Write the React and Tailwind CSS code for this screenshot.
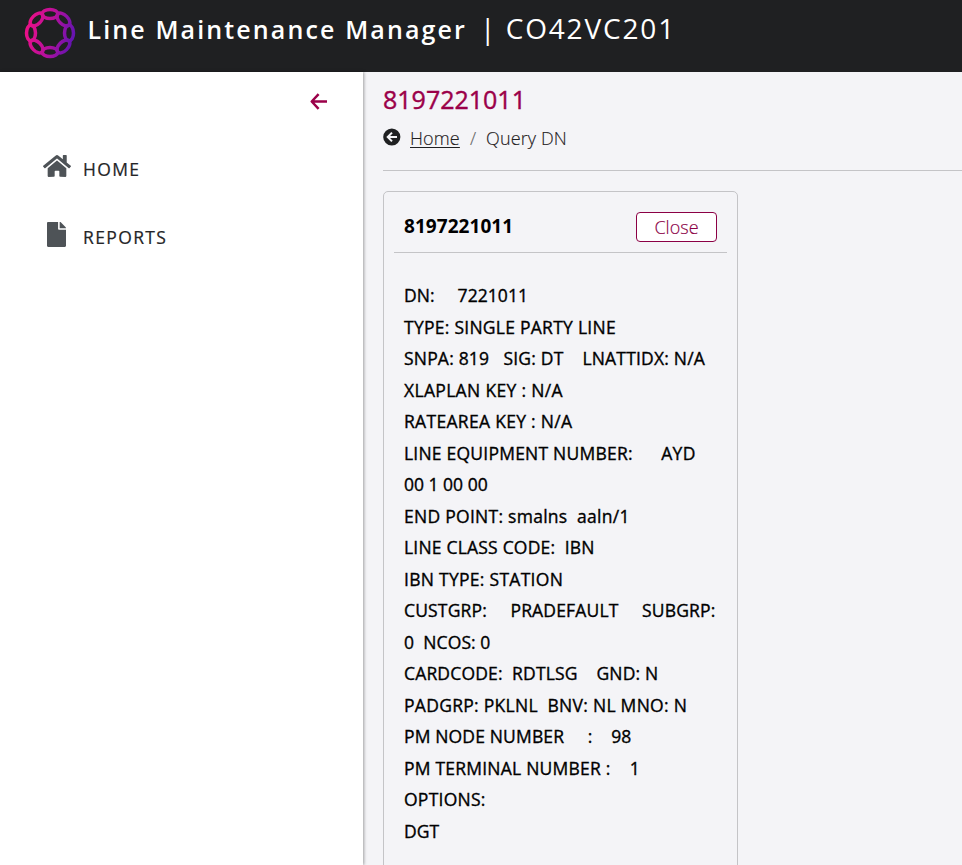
import { FaFile, FaHome } from "react-icons/fa";

const reportLines = [
  ["DN:     7221011", "tracking-[0.05px]"],
  ["TYPE: SINGLE PARTY LINE", "tracking-[0.26px]"],
  ["SNPA: 819   SIG: DT    LNATTIDX: N/A", "tracking-[0.19px]"],
  ["XLAPLAN KEY : N/A", "tracking-[0.33px]"],
  ["RATEAREA KEY : N/A", "tracking-[0.3px]"],
  ["LINE EQUIPMENT NUMBER:      AYD", "tracking-[0.22px]"],
  ["00 1 00 00", "tracking-[0px]"],
  ["END POINT: smalns  aaln/1", "tracking-[0.27px]"],
  ["LINE CLASS CODE:  IBN", "tracking-[0.2px]"],
  ["IBN TYPE: STATION", "tracking-[0.28px]"],
  ["CUSTGRP:     PRADEFAULT     SUBGRP:", "tracking-[0.16px]"],
  ["0  NCOS: 0", "tracking-[0.08px]"],
  ["CARDCODE:  RDTLSG    GND: N", "tracking-[0.16px]"],
  ["PADGRP: PKLNL  BNV: NL MNO: N", "tracking-[0.28px]"],
  ["PM NODE NUMBER     :    98", "tracking-[0.15px]"],
  ["PM TERMINAL NUMBER :    1", "tracking-[0.22px]"],
  ["OPTIONS:", "tracking-[0.25px]"],
  ["DGT", "tracking-[0px]"],
];

// Ring of eight interlocking links
function Logo() {
  return (
    <svg className="h-[52px] w-[52px] shrink-0" viewBox="0 0 52 52" fill="none">
      <defs>
        <linearGradient id="ring" gradientUnits="userSpaceOnUse" x1="3" y1="20" x2="49" y2="32">
          <stop offset="0" stopColor="#ea1088" />
          <stop offset="0.5" stopColor="#b8109c" />
          <stop offset="1" stopColor="#6414b0" />
        </linearGradient>
        <mask id="links" maskUnits="userSpaceOnUse" x="0" y="0" width="52" height="52">
          <g stroke="#fff" strokeWidth="3.5">
            {[0, 45, 90, 135, 180, 225, 270, 315].map((angle) => (
              <ellipse key={angle} cx="26" cy="7" rx="7.9" ry="4.5" transform={`rotate(${angle} 26 26)`} />
            ))}
          </g>
        </mask>
      </defs>
      <rect width="52" height="52" fill="url(#ring)" mask="url(#links)" />
    </svg>
  );
}

function CollapseArrow() {
  return (
    <svg className="h-[19px] w-[19px]" viewBox="0 0 19 19" fill="none" stroke="currentColor" strokeWidth="2.5">
      <path d="M9.6 2.2L2.7 9.5l6.9 7.3M3 9.5h15" strokeLinejoin="round" />
    </svg>
  );
}

function BackCircle() {
  return (
    <svg className="h-[18px] w-[18px]" viewBox="0 0 18 18" fill="none">
      <circle cx="8.8" cy="9" r="8.6" fill="currentColor" />
      <path d="M9 4.6L4.7 9L9 13.4M5 9h9" stroke="#f4f4f7" strokeWidth="2" />
    </svg>
  );
}

export default function App() {
  return (
    <div className="flex h-[865px] w-[962px] flex-col overflow-hidden bg-[#f4f4f7] font-['Open_Sans','Noto_Sans',sans-serif] text-black">
      <header className="flex h-[72px] shrink-0 items-start bg-[#1f2022] pl-6 text-white">
        <div className="pt-[7px]"><Logo /></div>
        <div className="flex items-baseline whitespace-pre pl-[11.5px] pt-[7px] leading-[42px]">
          <span className="text-[25px] font-semibold tracking-[2.12px]">Line Maintenance Manager</span>
          <span className="pl-[13px] text-[28px] tracking-[1.8px]">|</span>
          <span className="pl-[8.5px] text-[28px] tracking-[1.85px]">CO42VC201</span>
        </div>
      </header>
      <div className="flex min-h-0 flex-1">
        <aside className="relative z-10 w-[363px] shrink-0 bg-white shadow-[1px_0_3px_rgba(0,0,0,0.35)]">
          <div className="flex justify-end pr-[35px] pt-[20px] text-[#9b0049]">
            <CollapseArrow />
          </div>
          <nav className="pl-[43px] text-[17.5px] tracking-[1.37px] text-[#242527] [-webkit-text-stroke:0.2px_currentColor]">
            <div className="mt-[24px] flex h-[68px] items-center">
              <span className="flex w-[40px] pb-[6px] text-[#4e5357] [-webkit-text-stroke:0]"><FaHome size={28} /></span>
              <span>HOME</span>
            </div>
            <div className="flex h-[68px] items-center">
              <span className="flex w-[40px] pb-[6px] pl-[4px] text-[#4e5357] [-webkit-text-stroke:0]"><FaFile className="h-[25px] w-[19px]" preserveAspectRatio="none" /></span>
              <span>REPORTS</span>
            </div>
          </nav>
        </aside>
        <main className="min-w-0 flex-1 pl-5">
          <h1 className="pt-[9px] text-[25px] leading-9 text-[#9b0049] [-webkit-text-stroke:0.4px_currentColor]">8197221011</h1>
          <div className="mt-[9px] flex h-6 items-center text-[18px] font-light text-[#1f2022] [-webkit-text-stroke:0.15px_currentColor]">
            <span className="pb-[2px]"><BackCircle /></span>
            <span className="ml-[9px] tracking-[0.15px] underline underline-offset-2">Home</span>
            <span className="mx-[10px] text-[#666]">/</span>
            <span className="tracking-[0.12px]">Query DN</span>
          </div>
          <div className="mt-[20px] border-t border-[#c4c4c7]" />
          <section className="mt-[20px] h-[720px] w-[355px] rounded-[5px] border border-[#c4c4c7] px-[10px]">
            <div className="flex h-[61px] items-start justify-between border-b border-[#c4c4c7] px-[10px] pt-5">
              <h2 className="text-[19px] font-bold leading-[29px] tracking-[0.05px]">8197221011</h2>
              <button className="h-[30px] w-[81px] rounded-[4px] border border-[#8b0045] bg-white text-[18px] font-light leading-[28px] text-[#8b0045] [-webkit-text-stroke:0.15px_currentColor]">Close</button>
            </div>
            <div className="whitespace-pre pl-[10px] pt-[27px] text-[17.5px] leading-[31.5px] [-webkit-text-stroke:0.35px_currentColor]">
              {reportLines.map(([line, tracking]) => (
                <div key={line} className={tracking}>{line}</div>
              ))}
            </div>
          </section>
        </main>
      </div>
    </div>
  );
}
